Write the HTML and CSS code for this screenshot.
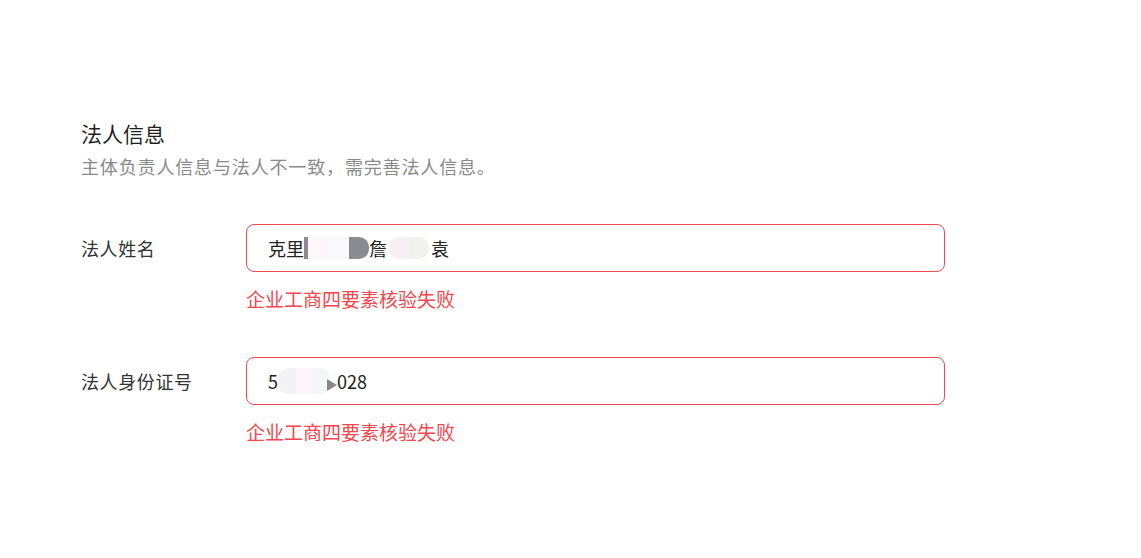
FILE: index.html
```html
<!DOCTYPE html>
<html lang="zh-CN">
<head>
<meta charset="utf-8">
<title>法人信息</title>
<link rel="stylesheet" href="styles.css">
</head>
<body>
<div class="page">
  <section class="section">
    <h2 class="title">法人信息</h2>
    <p class="desc">主体负责人信息与法人不一致，需完善法人信息。</p>
  </section>
  <div class="form">
    <div class="row">
      <div class="label">法人姓名</div>
      <div class="field">
        <div class="input"><span>克里</span><span class="mask m1"></span><span class="mask m2"></span><span class="mask m3"></span><span class="mask m4"></span><span>詹</span><span class="mask m5"></span><span class="mask m6"></span><span>袁</span></div>
        <div class="error">企业工商四要素核验失败</div>
      </div>
    </div>
    <div class="row">
      <div class="label">法人身份证号</div>
      <div class="field">
        <div class="input"><span>5</span><span class="mask n1"></span><span class="mask n2"></span><span class="mask n3"></span><span class="tri"></span><span>028</span></div>
        <div class="error">企业工商四要素核验失败</div>
      </div>
    </div>
  </div>
</div>
</body>
</html>
```

FILE: styles.css
```css
* { box-sizing: border-box; }
html, body { margin: 0; padding: 0; background: #fff; }
body {
  font-family: "Noto Sans CJK SC", "Noto Sans", sans-serif;
  color: #222;
}
.page {
  padding: 119px 0 0 81px;
}
.section { margin: 0; }
.title {
  margin: 0;
  font-size: 21px;
  line-height: 28px;
  font-weight: 400;
  color: #1f1f1f;
}
.desc {
  margin: 6px 0 0;
  font-size: 18px;
  line-height: 26px;
  letter-spacing: 0.85px;
  color: #8a8a8a;
}
.form {
  margin-top: 45px;
  display: flex;
  flex-direction: column;
  gap: 46px;
}
.row {
  display: flex;
  align-items: flex-start;
}
.label {
  width: 165px;
  flex: none;
  height: 48px;
  display: flex;
  align-items: center;
  font-size: 18px;
  letter-spacing: 0.6px;
  color: #333;
}
.field {
  display: flex;
  flex-direction: column;
  width: 699px;
}
.input {
  height: 48px;
  border: 1px solid #ef4a50;
  border-radius: 8px;
  padding: 0 21px;
  display: flex;
  align-items: center;
  font-size: 18px;
  color: #222;
  white-space: nowrap;
}
.error {
  margin-top: 15px;
  font-size: 19px;
  line-height: 24px;
  letter-spacing: 0;
  color: #f2474e;
}
.mask { display: inline-block; height: 22px; }
.m1 { width: 4px; background: #8f8890; }
.m2 { width: 20px; background: #fdf7f9; }
.m3 { width: 21px; background: #f9f8fc; }
.m4 { width: 20px; background: #8a8b91; border-radius: 0 10px 10px 0; }
.m5 { width: 20px; background: #f8f0f5; border-radius: 10px 0 0 10px; margin-left: 2px; }
.m6 { width: 20px; background: #f1f2ec; border-radius: 0 10px 10px 0; margin-right: 2px; }
.n1 { width: 18px; background: #f2f3f2; border-radius: 10px 0 0 10px; height: 26px; }
.n2 { width: 17px; background: #fcf6fb; height: 26px; }
.n3 { width: 17px; background: #f3f8f6; border-radius: 0 10px 10px 0; height: 26px; }
.tri {
  display: inline-block;
  width: 0; height: 0;
  border-top: 6px solid transparent;
  border-bottom: 6px solid transparent;
  border-left: 10px solid #888;
  margin-top: 8px;
  margin-left: -3px;
}
```
